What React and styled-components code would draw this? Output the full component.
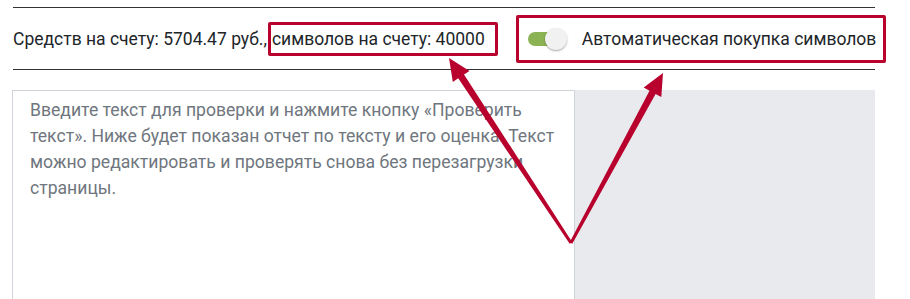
import styled, { createGlobalStyle } from "styled-components";

const GlobalStyle = createGlobalStyle`
  body {
    margin: 0;
    background: #fff;
    font-family: Roboto, "Liberation Sans", sans-serif;
    color: #212529;
  }
`;

const RED = "#b8022d";

const Page = styled.div`
  position: relative;
  width: 910px;
  height: 299px;
  overflow: hidden;
  padding: 7px 35px 0 12px;
  box-sizing: border-box;
`;

const Balance = styled.div`
  display: flex;
  align-items: center;
  height: 61px;
  margin-left: 1px;
  border-top: 1px solid #333;
  border-bottom: 1px solid #333;
  font-size: 17.5px;
  white-space: nowrap;
`;

const Marked = styled.div`
  display: inline-flex;
  align-items: center;
  box-sizing: border-box;
  height: ${(p) => p.$h}px;
  margin-left: ${(p) => p.$ml || 0}px;
  padding: ${(p) => p.$pad};
  border: 3px solid ${RED};
  border-radius: 2px;
`;

const Switch = styled.span`
  position: relative;
  display: inline-block;
  flex: none;
  width: 39px;
  height: 22px;
  margin-right: 15px;

  &::before {
    content: "";
    position: absolute;
    left: 0;
    top: 4px;
    width: 34px;
    height: 14px;
    border-radius: 7px;
    background: #8bb253;
  }
  &::after {
    content: "";
    position: absolute;
    right: 0;
    top: 0;
    width: 22px;
    height: 22px;
    border-radius: 50%;
    background: #f1f1f1;
    box-shadow: 0 1px 2px rgba(0, 0, 0, 0.35);
  }
`;

const Label = styled.span`
  color: #212529;
`;

const Workspace = styled.div`
  display: flex;
  margin-top: 20px;
  height: 240px;
`;

const Editor = styled.textarea`
  width: 563px;
  box-sizing: border-box;
  border: 1px solid #cfd4da;
  border-radius: 0;
  padding: 6px 12px 7px 17px;
  resize: none;
  outline: none;
  font-family: Roboto, "Liberation Sans", sans-serif;
  font-size: 17.6px;
  line-height: 26px;
  color: #212529;

  &::placeholder {
    color: #6f767e;
    opacity: 1;
  }
`;

const Side = styled.div`
  flex: 1;
  background: #e9eaee;
`;

const Overlay = styled.svg`
  position: absolute;
  left: 0;
  top: 0;
  pointer-events: none;
`;

function arrowPoints(from, to, head = 22, headHalf = 10, tail = 1.5, neck = 3.5) {
  const dx = to[0] - from[0];
  const dy = to[1] - from[1];
  const len = Math.hypot(dx, dy);
  const ux = dx / len;
  const uy = dy / len;
  const nx = -uy;
  const ny = ux;
  const bx = to[0] - ux * head;
  const by = to[1] - uy * head;
  const pts = [
    [from[0] + nx * tail, from[1] + ny * tail],
    [bx + nx * neck, by + ny * neck],
    [bx + nx * headHalf, by + ny * headHalf],
    to,
    [bx - nx * headHalf, by - ny * headHalf],
    [bx - nx * neck, by - ny * neck],
    [from[0] - nx * tail, from[1] - ny * tail],
  ];
  return pts.map((p) => p.map((v) => v.toFixed(1)).join(",")).join(" ");
}

export default function App() {
  const vertex = [571, 243];
  return (
    <>
      <GlobalStyle />
      <Page>
        <Balance>
          Средств на счету: 5704.47 руб.,
          <Marked $h={34} $pad="0 10px 0 1px" $ml={1}>
            символов на счету: 40000
          </Marked>
          <Marked $h={48} $pad="0 7px 0 9px" $ml={18}>
            <Switch />
            <Label>Автоматическая покупка символов</Label>
          </Marked>
        </Balance>
        <Workspace>
          <Editor placeholder="Введите текст для проверки и нажмите кнопку «Проверить текст». Ниже будет показан отчет по тексту и его оценка. Текст можно редактировать и проверять снова без перезагрузки страницы." />
          <Side />
        </Workspace>
        <Overlay width="910" height="299" viewBox="0 0 910 299">
          <polygon points={arrowPoints(vertex, [449, 58])} fill={RED} />
          <polygon points={arrowPoints(vertex, [663, 73])} fill={RED} />
        </Overlay>
      </Page>
    </>
  );
}
